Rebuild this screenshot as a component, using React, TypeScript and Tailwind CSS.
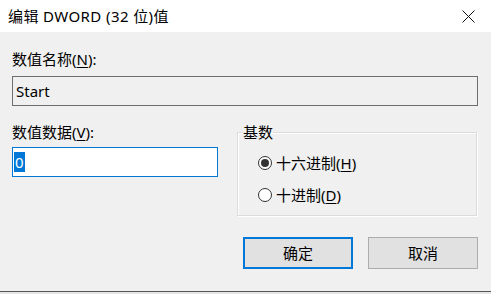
import React from "react";

const font = { fontFamily: '"Segoe UI", "Noto Sans", "Noto Sans CJK SC", sans-serif' };

function U({ children }: { children: React.ReactNode }) {
  return <span className="underline underline-offset-2">{children}</span>;
}

function Radio({ checked, children }: { checked?: boolean; children: React.ReactNode }) {
  return (
    <div className="flex items-center h-[20px]">
      <span className="ml-[20px] w-[14px] h-[14px] rounded-full border border-[#333] bg-white flex items-center justify-center">
        {checked && <span className="w-[8px] h-[8px] rounded-full bg-[#333]" />}
      </span>
      <span className="ml-[4px] leading-[20px]">{children}</span>
    </div>
  );
}

export default function App() {
  return (
    <div
      className="w-[491px] h-[294px] flex flex-col bg-[#f0f0f0] text-[15px] text-black overflow-hidden"
      style={font}
    >
      <div className="h-[32px] bg-white flex items-center justify-between pl-[8px] pr-[16px] shrink-0">
        <span className="leading-[20px] tracking-[0.4px]">编辑 DWORD (32 位)值</span>
        <svg width="13" height="13" viewBox="0 0 13 13">
          <path d="M0.5 0.5 L12.5 12.5 M12.5 0.5 L0.5 12.5" stroke="#111" strokeWidth="1" />
        </svg>
      </div>
      <div className="flex-1 flex flex-col pl-[12px] pr-[13px] pt-[17px]">
        <div className="leading-[20px]">
          数值名称(<U>N</U>):
        </div>
        <div className="mt-[7px] h-[30px] border border-[#6e6e6e] flex items-center pl-[3px] leading-[20px]">
          Start
        </div>
        <div className="mt-[16px] flex">
          <div className="w-[206px] flex flex-col">
            <div className="leading-[20px]">
              数值数据(<U>V</U>):
            </div>
            <div className="mt-[5px] h-[30px] border border-[#0078d7] bg-white flex items-center pl-[1px]">
              <span className="bg-[#0078d7] text-white leading-[20px] px-[1px]">0</span>
            </div>
          </div>
          <fieldset className="ml-[19px] w-[240px] h-[94px] border border-[#dcdcdc] shadow-[inset_1px_1px_0_#ffffff,1px_1px_0_#ffffff]">
            <legend className="ml-[5px] leading-[20px]">基数</legend>
            <div className="pt-[11px] flex flex-col gap-[12px]">
              <Radio checked>
                十六进制(<U>H</U>)
              </Radio>
              <Radio>
                十进制(<U>D</U>)
              </Radio>
            </div>
          </fieldset>
        </div>
        <div className="mt-[21px] flex justify-end gap-[15px]">
          <button className="w-[110px] h-[32px] border-2 border-[#0078d7] bg-[#e1e1e1] leading-[20px]">
            确定
          </button>
          <button className="w-[110px] h-[32px] border border-[#adadad] bg-[#e1e1e1] leading-[20px]">
            取消
          </button>
        </div>
      </div>
      <div className="h-[1px] bg-[#555555] shrink-0" />
      <div className="h-[2px] bg-[#e6e6e6] shrink-0" />
    </div>
  );
}
